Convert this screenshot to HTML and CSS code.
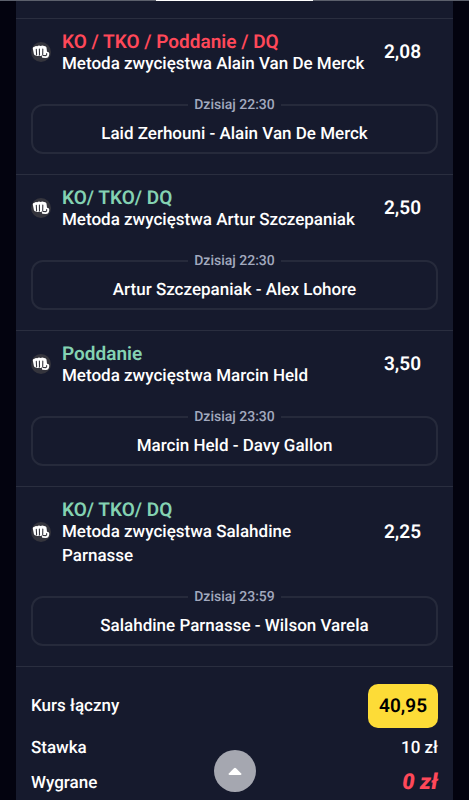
FILE: index.html
```html
<!DOCTYPE html>
<html lang="pl">
<head>
<meta charset="utf-8">
<meta name="viewport" content="width=device-width, initial-scale=1">
<title>Kupon</title>
<link rel="stylesheet" href="styles.css">
</head>
<body>
<svg class="defs" aria-hidden="true">
  <symbol id="fist" viewBox="0 0 20 20">
    <circle cx="10" cy="10" r="10" fill="#35353d"/>
    <path fill="#fff" d="M1.8 6.4Q1.8 4.6 3.5 4.7Q4.6 3.4 6.2 4.2Q7.7 3 9.6 3.9Q11.2 3 13.2 3.9Q15.3 3.9 15.5 5.6L16 9.8Q18.6 10.2 18.2 12.4Q17.8 15.9 14.8 15.9L11.3 15.7Q10.2 14.4 11.4 13.8L10.6 13.4Q9.3 14.4 8 13.4Q6.5 14.4 5.2 13.4Q3.3 13.8 2.9 12Z"/>
    <path fill="none" stroke="#35353d" stroke-width="1.1" stroke-linecap="round" d="M5.3 7.3L5.6 12.8M8.4 7.1L8.5 12.9M11.8 7L11.7 12.5M11.9 13.5L14.9 13.6Q16 13.2 15.7 11.5"/>
  </symbol>
</svg>
<div class="progress"><div class="progress-thumb"></div></div>
<main class="coupon">
  <article class="bet">
    <div class="pick">
      <svg class="sport" role="img" aria-label="MMA"><use href="#fist"/></svg>
      <div class="pick-text"><h2 class="outcome lost">KO / TKO / Poddanie / DQ</h2><p class="market">Metoda zwycięstwa Alain Van De Merck</p></div>
      <strong class="odds">2,08</strong>
    </div>
    <fieldset class="match"><legend>Dzisiaj 22:30</legend><p>Laid Zerhouni - Alain Van De Merck</p></fieldset>
  </article>
  <article class="bet">
    <div class="pick">
      <svg class="sport" role="img" aria-label="MMA"><use href="#fist"/></svg>
      <div class="pick-text"><h2 class="outcome">KO/ TKO/ DQ</h2><p class="market">Metoda zwycięstwa Artur Szczepaniak</p></div>
      <strong class="odds">2,50</strong>
    </div>
    <fieldset class="match"><legend>Dzisiaj 22:30</legend><p>Artur Szczepaniak - Alex Lohore</p></fieldset>
  </article>
  <article class="bet">
    <div class="pick">
      <svg class="sport" role="img" aria-label="MMA"><use href="#fist"/></svg>
      <div class="pick-text"><h2 class="outcome">Poddanie</h2><p class="market">Metoda zwycięstwa Marcin Held</p></div>
      <strong class="odds">3,50</strong>
    </div>
    <fieldset class="match"><legend>Dzisiaj 23:30</legend><p>Marcin Held - Davy Gallon</p></fieldset>
  </article>
  <article class="bet">
    <div class="pick">
      <svg class="sport" role="img" aria-label="MMA"><use href="#fist"/></svg>
      <div class="pick-text"><h2 class="outcome">KO/ TKO/ DQ</h2><p class="market">Metoda zwycięstwa Salahdine Parnasse</p></div>
      <strong class="odds">2,25</strong>
    </div>
    <fieldset class="match"><legend>Dzisiaj 23:59</legend><p>Salahdine Parnasse - Wilson Varela</p></fieldset>
  </article>
  <dl class="summary">
    <div class="row"><dt>Kurs łączny</dt><dd class="total">40,95</dd></div>
    <div class="row"><dt>Stawka</dt><dd>10 zł</dd></div>
    <div class="row win"><dt>Wygrane</dt><dd class="prize">0 zł</dd></div>
  </dl>
</main>
<button class="to-top" type="button" aria-label="Do góry">
  <svg viewBox="0 0 14 8" width="14" height="8" aria-hidden="true"><path fill="#fff" d="M.8 6.4L6 1.2Q7 .3 8 1.2L13.2 6.4Q14 7.8 12.5 8H1.5Q0 7.8.8 6.4Z"/></svg>
</button>
</body>
</html>
```
FILE: styles.css
```css
* { box-sizing: border-box; }

html { background: #03030f; overflow-x: hidden; scrollbar-width: none; }

body {
  margin: 0;
  color: #fff;
  font: 500 17px/24px Roboto, sans-serif;
  text-rendering: geometricPrecision;
}

h2, p, dl, dd { margin: 0; }

.defs { position: absolute; width: 0; height: 0; }

.progress {
  position: fixed;
  top: 0;
  left: 0;
  right: 0;
  height: 1px;
  display: flex;
  justify-content: center;
  background: #5c606c;
}

.progress-thumb { width: 33.33%; background: #fff; }

.coupon {
  margin: 0 16px;
  padding-top: 18px;
  background: #161a2d;
}

.bet {
  padding: 13px 15px 20px;
  border-top: 1px solid #2a2e3f;
}

.pick {
  display: grid;
  grid-template-columns: 20px 1fr 61px;
  column-gap: 11px;
  align-items: center;
}

.sport { width: 20px; height: 20px; margin-bottom: 4px; }

.outcome {
  color: #84d2b2;
  font-size: 19px;
  font-weight: 600;
  line-height: 20px;
}

.outcome.lost { color: #ff4859; }

.odds {
  margin-bottom: 4px;
  padding-right: 17px;
  font-size: 19px;
  font-weight: 600;
  text-align: right;
}

.match {
  min-width: 0;
  margin: 19px 0 0;
  padding: 7px 12px 6px;
  border: 2px solid #262a3b;
  border-radius: 12px;
  text-align: center;
}

.match legend {
  margin: 0 auto;
  padding: 0 6px;
  color: #a2a9be;
  font-size: 14px;
  line-height: 20px;
}

.summary {
  padding: 17px 15px 6px;
  border-top: 1px solid #2a2e3f;
}

.row {
  display: flex;
  justify-content: space-between;
  align-items: center;
}

.row + .row { margin-top: 8px; }
.row.win { margin-top: 11px; }

.total {
  padding: 10px 11px;
  border-radius: 10px;
  background: #fddc37;
  color: #000;
  font-size: 19px;
  font-weight: 600;
}

.prize {
  color: #ff4859;
  font: italic 900 22px/24px Roboto, sans-serif;
}

.to-top {
  position: fixed;
  bottom: 8px;
  left: 50%;
  display: grid;
  place-items: center;
  width: 42px;
  height: 42px;
  margin-left: -21px;
  padding: 0;
  border: 0;
  border-radius: 50%;
  background: #a5a7b0;
}
```
